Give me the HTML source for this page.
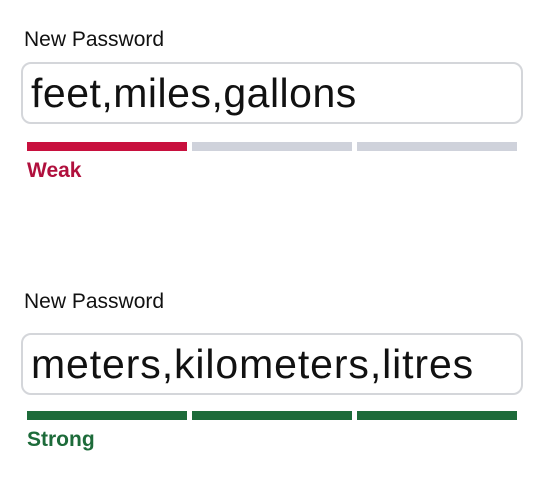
<!DOCTYPE html>
<html><head><style>
body{margin:0;width:540px;height:479px;background:#fff;font-family:"Liberation Sans",sans-serif;position:relative;overflow:hidden}
.l{position:absolute;left:24px;font-size:21px;color:#111}
.box{position:absolute;left:21px;width:502px;height:62px;border:2px solid #d4d6da;border-radius:10px;box-sizing:border-box}
.box span{position:absolute;left:8px;top:6px;font-size:41px;color:#111;font-family:"Liberation Sans",sans-serif;letter-spacing:0.5px}
.bar{position:absolute;height:9px;width:160px}
.s{position:absolute;left:27px;font-size:21px;font-weight:bold}
</style></head><body>
<div class="l" style="top:28px">New Password</div>
<div class="box" style="top:62px"><span>feet,miles,gallons</span></div>
<div class="bar" style="left:27px;top:142px;background:#c8103e"></div>
<div class="bar" style="left:192px;top:142px;background:#cfd2db"></div>
<div class="bar" style="left:357px;top:142px;background:#cfd2db"></div>
<div class="s" style="top:159px;color:#b0103d">Weak</div>

<div class="l" style="top:290px">New Password</div>
<div class="box" style="top:333px"><span style="letter-spacing:0.9px">meters,kilometers,litres</span></div>
<div class="bar" style="left:27px;top:411px;background:#1d6b3a"></div>
<div class="bar" style="left:192px;top:411px;background:#1d6b3a"></div>
<div class="bar" style="left:357px;top:411px;background:#1d6b3a"></div>
<div class="s" style="top:428px;color:#1d6b3a">Strong</div>
</body></html>
